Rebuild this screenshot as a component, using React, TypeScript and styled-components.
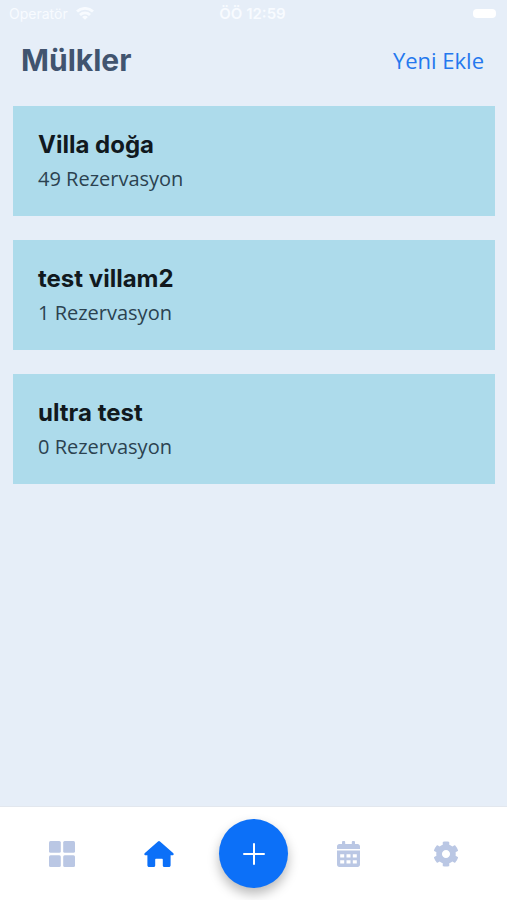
import React from "react";
import styled, { createGlobalStyle } from "styled-components";

const GlobalStyle = createGlobalStyle`
  *, *::before, *::after { box-sizing: border-box; }
  body { margin: 0; background: #e6eef8; }
`;

const heading = `Inter, "Liberation Sans", sans-serif`;
const text = `"Open Sans", "Noto Sans", sans-serif`;

const Screen = styled.div`
  min-height: 100vh;
  display: flex;
  flex-direction: column;
  background: #e6eef8;
  font-family: ${text};
`;

const StatusBar = styled.div`
  display: grid;
  grid-template-columns: 1fr auto 1fr;
  align-items: center;
  height: 27px;
  padding: 0 11px 0 9px;
  font-family: ${heading};
  font-size: 15px;
  color: #f8fbff;
`;

const Carrier = styled.span`
  display: flex;
  align-items: center;
  gap: 8px;
  font-size: 14px;
`;

const Clock = styled.span`
  font-weight: 600;
`;

const Battery = styled.span`
  justify-self: end;
  width: 23px;
  height: 9px;
  border-radius: 4px;
  background: #ffffff;
`;

const Header = styled.header`
  display: flex;
  align-items: center;
  justify-content: space-between;
  height: 66px;
  padding: 0 23px 0 21px;
`;

const Title = styled.h1`
  margin: 0;
  font-family: ${heading};
  font-size: 30px;
  font-weight: 700;
  line-height: 36px;
  color: #41546f;
`;

const AddLink = styled.a`
  font-size: 22px;
  line-height: 30px;
  color: #2478ee;
  text-decoration: none;
`;

const List = styled.main`
  flex: 1;
  display: flex;
  flex-direction: column;
  gap: 24px;
  padding: 13px 12px 24px 13px;
`;

const Card = styled.article`
  padding: 22px 25px 20px;
  background: #addbeb;
`;

const CardTitle = styled.h2`
  margin: 0;
  font-family: ${heading};
  font-size: 24px;
  font-weight: 700;
  line-height: 34px;
  color: #11191e;
`;

const CardText = styled.p`
  margin: 0;
  font-size: 20px;
  line-height: 34px;
  color: #2b4250;
`;

const TabBar = styled.nav`
  display: flex;
  align-items: center;
  justify-content: space-between;
  height: 94px;
  padding: 0 25px;
  border-top: 1px solid #e2e7ee;
  background: #ffffff;
`;

const Tab = styled.button<{ $active?: boolean }>`
  display: grid;
  place-items: center;
  width: 73px;
  height: 48px;
  padding: 0;
  border: 0;
  background: none;
  color: ${(p) => (p.$active ? "#0c70f8" : "#bac7e4")};
  cursor: pointer;
`;

const AddButton = styled(Tab)`
  width: 69px;
  height: 69px;
  border-radius: 50%;
  background: #0c70f8;
  color: #ffffff;
  box-shadow: 0 6px 12px rgba(0, 0, 0, 0.28);
`;

const WifiIcon = () => (
  <svg width="18" height="13" viewBox="0 0 18 13" fill="none" stroke="currentColor" strokeWidth="2.8" aria-hidden="true">
    <path d="M1 4.600C5.600.300 12.400.300 17 4.600" />
    <path d="M4 7.900C6.800 5.200 11.200 5.200 14 7.900" />
    <path d="M9 12.800 6.100 9.900c1.600-1.500 4.200-1.500 5.800 0z" fill="currentColor" stroke="none" />
  </svg>
);

const GridIcon = () => (
  <svg width="26" height="26" viewBox="0 0 26 26" fill="currentColor" aria-hidden="true">
    <rect width="11.8" height="11.8" rx="1.5" />
    <rect x="14.2" width="11.8" height="11.8" rx="1.5" />
    <rect y="14.2" width="11.8" height="11.8" rx="1.5" />
    <rect x="14.2" y="14.2" width="11.8" height="11.8" rx="1.5" />
  </svg>
);

const HomeIcon = () => (
  <svg width="30" height="26" viewBox="0 0 30 26" fill="currentColor" aria-hidden="true">
    <path d="M14 .500a1.500 1.500 0 0 1 2 0L29.100 12c1 .9.600 2.300-.8 2.300h-1.700v9.900c0 1.100-.7 1.800-1.800 1.800h-4.500c-.9 0-1.500-.6-1.500-1.500v-5.700c0-.6-.4-1-1-1h-5.600c-.6 0-1 .4-1 1v5.700c0 .9-.6 1.500-1.500 1.500H5.200c-1.100 0-1.800-.7-1.800-1.800v-9.900H1.700c-1.400 0-1.800-1.400-.8-2.300z" />
  </svg>
);

const PlusIcon = () => (
  <svg width="22" height="22" viewBox="0 0 22 22" fill="none" stroke="currentColor" strokeWidth="2" strokeLinecap="round" aria-hidden="true">
    <path d="M11 1v20M1 11h20" />
  </svg>
);

const CalendarIcon = () => (
  <svg width="23" height="26" viewBox="0 0 23 26" fill="currentColor" fillRule="evenodd" aria-hidden="true">
    <path d="M2.400 3H5V1.200C5 .5 5.500 0 6.200 0h.8c.7 0 1.200.5 1.200 1.200V3h6.600V1.200c0-.7.5-1.200 1.200-1.200h.8c.7 0 1.200.5 1.200 1.200V3h2.600C22 3 23 4 23 5.400V8H0V5.400C0 4 1 3 2.400 3z" />
    <path d="M0 9.400h23v14.200c0 1.400-1 2.400-2.400 2.400H2.400C1 26 0 25 0 23.600zM3.200 13.200v3.200h4v-3.200zM9.500 13.200v3.200h4v-3.200zM15.800 13.200v3.200h4v-3.200zM3.200 19.300v3.200h4v-3.200zM9.500 19.300v3.200h4v-3.200zM15.800 19.300v3.200h4v-3.200z" />
  </svg>
);

const GearIcon = () => (
  <svg width="26" height="26" viewBox="0 0 512 512" fill="currentColor" aria-hidden="true">
    <path d="M487.400 315.700l-42.600-24.600c4.300-23.200 4.300-47 0-70.200l42.600-24.600c4.900-2.800 7.100-8.600 5.500-14-11.100-35.600-30-67.800-54.700-94.600-3.800-4.100-10-5.100-14.800-2.300L380.800 110c-17.900-15.400-38.500-27.300-60.800-35.100V25.800c0-5.600-3.900-10.500-9.400-11.700-36.700-8.200-74.300-7.800-109.200 0-5.500 1.200-9.400 6.100-9.400 11.700V75c-22.200 7.900-42.800 19.800-60.800 35.100L88.700 85.500c-4.900-2.800-11-1.900-14.800 2.300-24.700 26.700-43.600 58.900-54.700 94.600-1.700 5.400.6 11.200 5.500 14L67.300 221c-4.300 23.200-4.300 47 0 70.200l-42.600 24.600c-4.900 2.800-7.100 8.600-5.500 14 11.100 35.600 30 67.800 54.700 94.600 3.800 4.100 10 5.100 14.800 2.300l42.600-24.600c17.900 15.400 38.500 27.300 60.800 35.100v49.200c0 5.600 3.900 10.500 9.400 11.700 36.700 8.200 74.300 7.800 109.200 0 5.500-1.200 9.400-6.100 9.400-11.700v-49.200c22.200-7.900 42.800-19.800 60.800-35.100l42.600 24.600c4.900 2.800 11 1.900 14.800-2.300 24.700-26.700 43.600-58.900 54.700-94.600 1.500-5.500-.7-11.300-5.600-14.100zM256 336c-44.100 0-80-35.900-80-80s35.900-80 80-80 80 35.900 80 80-35.900 80-80 80z" />
  </svg>
);

const properties = [
  { name: "Villa doğa", reservations: 49 },
  { name: "test villam2", reservations: 1 },
  { name: "ultra test", reservations: 0 },
];

export default function App() {
  return (
    <>
      <GlobalStyle />
      <Screen>
        <StatusBar>
          <Carrier>
            Operatör
            <WifiIcon />
          </Carrier>
          <Clock>ÖÖ 12:59</Clock>
          <Battery />
        </StatusBar>
        <Header>
          <Title>Mülkler</Title>
          <AddLink href="#new">Yeni Ekle</AddLink>
        </Header>
        <List>
          {properties.map((p) => (
            <Card key={p.name}>
              <CardTitle>{p.name}</CardTitle>
              <CardText>{p.reservations} Rezervasyon</CardText>
            </Card>
          ))}
        </List>
        <TabBar>
          <Tab type="button" aria-label="Panel"><GridIcon /></Tab>
          <Tab type="button" aria-label="Mülkler" aria-current="page" $active><HomeIcon /></Tab>
          <AddButton type="button" aria-label="Ekle"><PlusIcon /></AddButton>
          <Tab type="button" aria-label="Takvim"><CalendarIcon /></Tab>
          <Tab type="button" aria-label="Ayarlar"><GearIcon /></Tab>
        </TabBar>
      </Screen>
    </>
  );
}
